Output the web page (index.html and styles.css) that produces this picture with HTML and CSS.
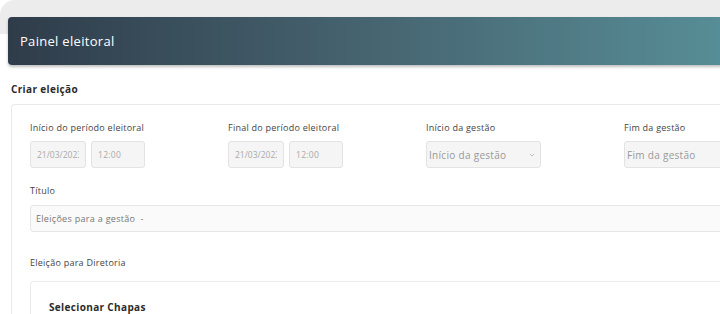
FILE: index.html
```html
<!DOCTYPE html>
<html lang="pt-BR">
<head>
    <meta charset="UTF-8">
    <meta name="viewport" content="width=device-width, initial-scale=1.0">
    <title>Painel eleitoral</title>
    <link rel="stylesheet" href="styles.css">
</head>
<body>
    <div class="app">
        <div class="banner">Painel eleitoral</div>

        <div class="content">
            <h2 class="section-title">Criar eleição</h2>
            <div class="card">
                <div class="row">
                    <div class="field">
                        <label>Início do período eleitoral</label>
                        <div class="pair">
                            <input type="text" class="date" value="21/03/2023" disabled>
                            <input type="text" class="time" value="12:00" disabled>
                        </div>
                    </div>
                    <div class="field">
                        <label>Final do período eleitoral</label>
                        <div class="pair">
                            <input type="text" class="date" value="21/03/2023" disabled>
                            <input type="text" class="time" value="12:00" disabled>
                        </div>
                    </div>
                    <div class="field">
                        <label>Início da gestão</label>
                        <div class="select">
                            <span>Início da gestão</span>
                            <svg width="6" height="4" viewBox="0 0 6 4"><path d="M0.8 1 L3 3 L5.2 1" fill="none" stroke="#aaa" stroke-width="0.7"/></svg>
                        </div>
                    </div>
                    <div class="field">
                        <label>Fim da gestão</label>
                        <input type="text" class="wide" placeholder="Fim da gestão">
                    </div>
                </div>

                <label class="title-label">Título</label>
                <input type="text" class="title-input" value="Eleições para a gestão  -">

                <p class="group-label">Eleição para Diretoria</p>
                <div class="inner-card">
                    <h3>Selecionar Chapas</h3>
                </div>
            </div>
        </div>
    </div>
</body>
</html>
```

FILE: styles.css
```css
html, body {
    margin: 0;
    padding: 0;
    overflow: hidden;
}

body {
    font-family: "Open Sans", "Liberation Sans", sans-serif;
    background-color: #fff;
    color: #333;
}

.app {
    width: 780px;
    height: 314px;
    padding: 17px 0 0 8px;
    box-sizing: border-box;
    background: linear-gradient(#ececec 34px, #fff 34px);
    border-radius: 15px 15px 0 0;
}

.banner {
    height: 48px;
    box-sizing: border-box;
    padding-left: 12px;
    display: flex;
    align-items: center;
    border-radius: 4px;
    background: linear-gradient(90deg, #2f3c4a 0px, #466470 360px, #578d96 712px);
    box-shadow: 0 2px 3px rgba(0, 0, 0, 0.25);
    color: #fff;
    font-size: 13px;
    letter-spacing: 0.3px;
}

.content {
    padding-left: 3px;
}

.section-title {
    margin: 18px 0 8px;
    font-size: 10px;
    font-weight: 700;
    letter-spacing: 0.35px;
    color: #2b2b2b;
    line-height: 13px;
}

.card {
    border: 1px solid #e9e9e9;
    border-right: none;
    border-radius: 4px 0 0 0;
    padding: 17px 0 0 18px;
    height: 220px;
}

.row {
    display: grid;
    grid-template-columns: repeat(4, 198px);
}

label, .group-label {
    display: block;
    font-size: 9px;
    letter-spacing: 0.25px;
    color: #444;
    line-height: 12px;
}

.field label {
    margin-bottom: 7px;
}

.pair {
    display: flex;
    gap: 5px;
}

input, .select {
    height: 27px;
    box-sizing: border-box;
    border: 1px solid #e3e3e3;
    border-radius: 3px;
    background-color: #f5f5f5;
    font-family: inherit;
    font-size: 8.5px;
    letter-spacing: 0.3px;
    color: #aaa;
    padding: 0 6px;
    margin: 0;
    outline: none;
}

input::placeholder {
    color: #999;
}

.date {
    width: 56px;
    letter-spacing: 0;
}

.time {
    width: 54px;
}

.select {
    width: 115px;
    display: flex;
    align-items: center;
    justify-content: space-between;
    color: #999;
    font-size: 10px;
    letter-spacing: 0.3px;
    padding: 0 5px 0 2px;
}

.wide {
    width: 120px;
    padding-left: 2px;
    font-size: 10px;
}

.title-label {
    margin: 17px 0 8px;
}

.title-input {
    display: block;
    width: 720px;
    background-color: #fafafa;
    border-color: #e6e6e6;
    color: #777;
    font-size: 9px;
    padding-left: 5px;
}

.group-label {
    margin: 25px 0 12px;
}

.inner-card {
    border: 1px solid #ececec;
    border-right: none;
    border-radius: 4px 0 0 0;
    padding: 19px 0 0 18px;
    height: 60px;
}

.inner-card h3 {
    margin: 0;
    font-size: 10px;
    font-weight: 700;
    letter-spacing: 0.35px;
    color: #2b2b2b;
    line-height: 13px;
}
```
